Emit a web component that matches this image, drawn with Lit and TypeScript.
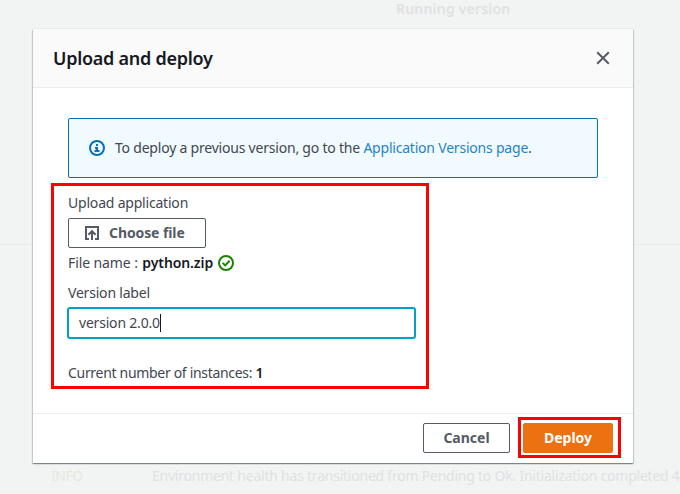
import { LitElement, html, css, svg } from "lit";
import { customElement, property } from "lit/decorators.js";

const icons: Record<string, unknown> = {
  close: svg`<path d="M2.2 2.2 13.8 13.8M13.8 2.2 2.2 13.8" />`,
  info: svg`<circle cx="8" cy="8" r="7" /><path d="M8 11V8H6M10.5 11H5.5M8 6V4" />`,
  check: svg`<circle cx="8" cy="8" r="7" /><path d="M4.6 7.9 7.2 10.4 11.6 5.8" />`,
  upload: svg`<path d="M5 14H2V2H14V14H11M8 15V6.4M4.4 9.8 8 6.2 11.6 9.8" />`,
};

@customElement("line-icon")
export class LineIcon extends LitElement {
  @property() name = "close";
  static styles = css`
    :host { display: inline-block; width: 16px; height: 16px; flex: none; }
    svg { display: block; width: 100%; height: 100%; fill: none; stroke: currentColor; stroke-width: 2; }
  `;
  render() {
    return html`<svg viewBox="0 0 16 16">${icons[this.name]}</svg>`;
  }
}

@customElement("app-root")
export class AppRoot extends LitElement {
  static styles = css`
    * { box-sizing: border-box; }
    :host {
      display: block; position: relative; width: 680px; height: 494px; overflow: hidden;
      background: #f2f4f4; color: #424650; white-space: nowrap;
      font: 14px/20px "Noto Sans", "Open Sans", sans-serif; letter-spacing: -0.2px;
    }
    .page { height: 494px; display: flex; flex-direction: column; color: #dfe1e2; }
    .heading { height: 244px; padding: 0 0 0 396px; line-height: 18px; font-weight: 600; letter-spacing: 0.2px; }
    .panel { height: 171px; border-top: 1px solid #eaecec; }
    .event { height: 79px; border-top: 1px solid #f0f2f2; padding: 50px 0 0 51px; display: flex; letter-spacing: -0.23px; }
    .level { flex: none; width: 101px; color: #e7e8df; letter-spacing: -0.5px; }
    .modal {
      position: absolute; left: 33px; top: 29px; width: 600px; height: 434px;
      display: flex; flex-direction: column; background: #fff;
      box-shadow: 0 1px 1px 0 rgba(0,28,36,.3), 1px 1px 1px 0 rgba(0,28,36,.15), -1px 1px 1px 0 rgba(0,28,36,.15), 0 -1px 0 0 #e5eaea;
    }
    header { height: 59px; padding: 0 22px 0 20px; display: flex; align-items: center; justify-content: space-between; background: #fafafa; border-bottom: 1px solid #eaeded; color: #16191f; }
    h2 { margin: 0; font-size: 18px; line-height: 22px; font-weight: 600; letter-spacing: -0.27px; }
    header line-icon { color: #545b64; }
    main { height: 325px; padding: 30px 35px 0; }
    .alert { height: 60px; border: 1px solid #0073bb; border-radius: 2px; background: #f1faff; padding: 0 20px; display: flex; align-items: center; gap: 10px; letter-spacing: -0.21px; }
    .alert line-icon { color: #0073bb; }
    .link { color: #1f84c6; }
    .form { width: 378px; height: 206px; margin: 5px 0 0 -17px; padding: 7px 11px 0 14px; border: 3px solid #f00; display: flex; flex-direction: column; align-items: flex-start; }
    .btn { height: 30px; display: flex; align-items: center; justify-content: center; border: 1px solid #545b64; border-radius: 2px; color: #545b64; background: #fff; font-weight: 700; letter-spacing: 0; }
    .choose { width: 138px; margin: 5px 0; padding-left: 15px; gap: 9px; justify-content: flex-start; letter-spacing: -0.1px; }
    .row { display: flex; align-items: center; letter-spacing: -0.1px; }
    b { color: #16191f; font-weight: 600; }
    .row b { margin-left: 1px; }
    .ok { color: #1d8102; margin-left: 5px; }
    .label { margin-top: 10px; }
    .input { width: 349px; height: 32px; margin: 4px 0 0 -1px; padding: 0 10px; border: 2px solid #00a1c9; border-radius: 3px; display: flex; align-items: center; }
    .caret { width: 1px; height: 18px; background: #16191f; }
    .count { margin-top: 24px; letter-spacing: -0.31px; }
    footer { height: 50px; border-top: 1px solid #eaeded; padding: 4px 12px 0 0; display: flex; align-items: flex-start; justify-content: flex-end; gap: 8px; }
    .cancel { width: 87px; margin-top: 5px; }
    .frame { width: 103px; height: 41px; margin-top: -1px; border: 3px solid #f00; padding: 3px 2px; }
    .deploy { width: 90px; border-color: #ec7211; background: #ec7211; color: #fff; }
  `;
  render() {
    return html`
      <div class="page">
        <div class="heading">Running version</div>
        <div class="panel"></div>
        <div class="event"><span class="level">INFO</span><span>Environment health has transitioned from Pending to Ok. Initialization completed 4</span></div>
      </div>
      <section class="modal" role="dialog">
        <header><h2>Upload and deploy</h2><line-icon name="close"></line-icon></header>
        <main>
          <div class="alert"><line-icon name="info"></line-icon><span>To deploy a previous version, go to the <span class="link">Application Versions page</span>.</span></div>
          <div class="form">
            <span>Upload application</span>
            <div class="btn choose"><line-icon name="upload"></line-icon><span>Choose file</span></div>
            <div class="row"><span>File name :&nbsp;</span><b>python.zip</b><line-icon class="ok" name="check"></line-icon></div>
            <span class="label">Version label</span>
            <div class="input"><span>version 2.0.0</span><i class="caret"></i></div>
            <div class="count">Current number of instances: <b>1</b></div>
          </div>
        </main>
        <footer><div class="btn cancel">Cancel</div><div class="frame"><div class="btn deploy">Deploy</div></div></footer>
      </section>`;
  }
}
